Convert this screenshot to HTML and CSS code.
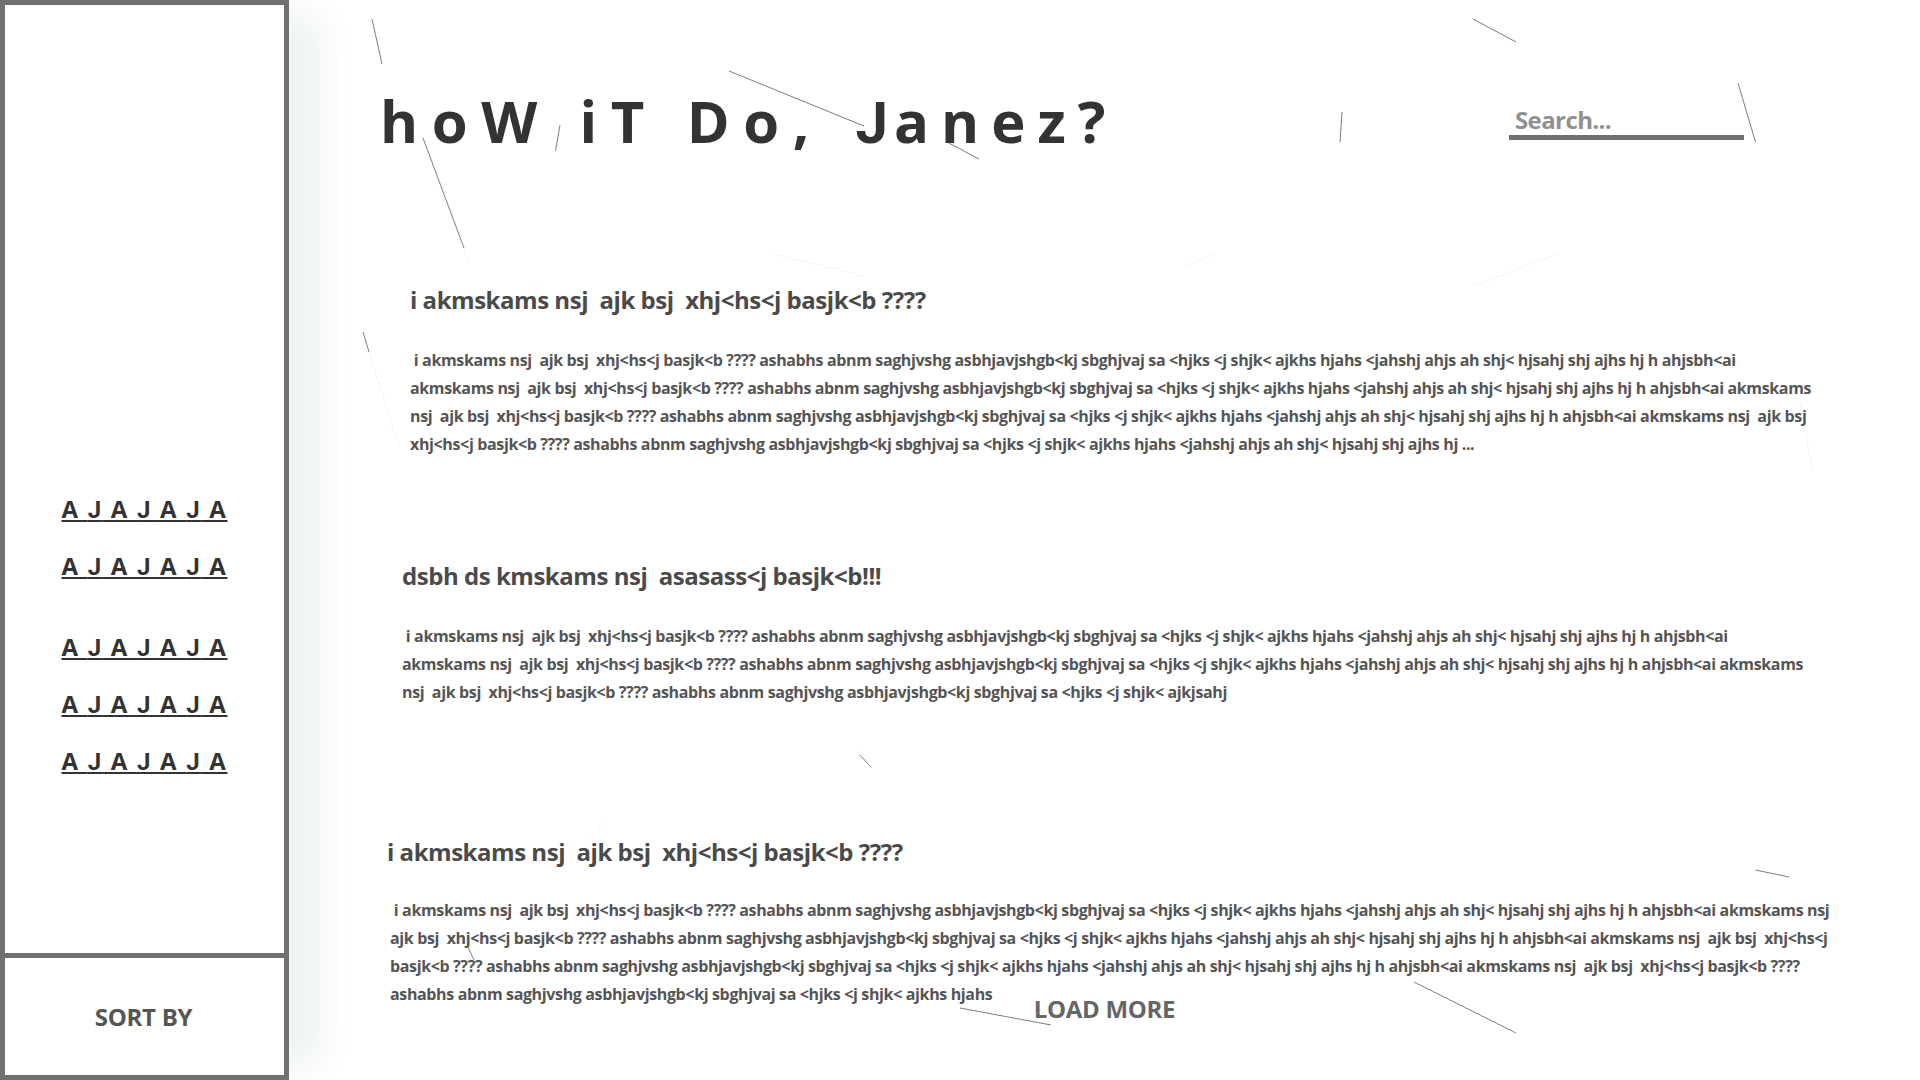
FILE: index.html
```html
<!DOCTYPE html>
<html>
<head lang="en">
    <meta charset="UTF-8">
    <title>hoW iT Do, Janez?</title>
    <link rel="stylesheet" href="styles.css">
</head>
<body>
<svg class="scratches" width="1920" height="1080" viewBox="0 0 1920 1080">
    <g class="dark">
        <line x1="372" y1="19" x2="382" y2="64"/>
        <line x1="423" y1="138" x2="464" y2="248"/>
        <line x1="560" y1="125" x2="555.5" y2="151"/>
        <line x1="363" y1="332" x2="369" y2="352"/>
        <line x1="729" y1="71" x2="864" y2="126"/>
        <line x1="947" y1="142" x2="979" y2="159"/>
        <line x1="1473" y1="19" x2="1516" y2="42"/>
        <line x1="1342" y1="112" x2="1340" y2="142"/>
        <line x1="1738" y1="83" x2="1755.5" y2="142"/>
        <line x1="860" y1="755" x2="871" y2="767"/>
        <line x1="468" y1="947" x2="474" y2="960"/>
        <line x1="960" y1="1008" x2="1051" y2="1025"/>
        <line x1="1414" y1="982" x2="1516" y2="1033"/>
        <line x1="1755.5" y1="870" x2="1789" y2="877"/>
    </g>
    <g class="faint">
        <line x1="464" y1="248" x2="468" y2="260"/>
        <line x1="369" y1="352" x2="399" y2="447"/>
        <line x1="775" y1="254" x2="864" y2="276"/>
        <line x1="1215.5" y1="254" x2="1184" y2="266"/>
        <line x1="1557" y1="254" x2="1473" y2="286"/>
        <line x1="1800" y1="404" x2="1812" y2="467"/>
        <line x1="855.5" y1="749" x2="860" y2="755"/>
        <line x1="604" y1="823" x2="586.5" y2="843"/>
        <line x1="536" y1="286" x2="536" y2="292"/>
    </g>
</svg>

<div class="page">
    <aside class="sidebar">
        <nav class="sidebar-nav">
            <div class="nav-group">
                <a class="nav-link" href="#">A <span class="j">J</span> A <span class="j">J</span> A <span class="j">J</span> A</a>
                <a class="nav-link" href="#">A <span class="j">J</span> A <span class="j">J</span> A <span class="j">J</span> A</a>
            </div>
            <div class="nav-group">
                <a class="nav-link" href="#">A <span class="j">J</span> A <span class="j">J</span> A <span class="j">J</span> A</a>
                <a class="nav-link" href="#">A <span class="j">J</span> A <span class="j">J</span> A <span class="j">J</span> A</a>
                <a class="nav-link" href="#">A <span class="j">J</span> A <span class="j">J</span> A <span class="j">J</span> A</a>
            </div>
        </nav>
        <div class="sort-box">SORT BY</div>
    </aside>

    <main class="main">
        <header class="top">
            <h1 class="title">hoW iT Do, <span class="j">J</span><span class="title-end">anez?</span></h1>
            <input class="search" type="text" placeholder="Search...">
        </header>

        <article class="post post-first">
            <h3>i akmskams nsj  ajk bsj  xhj&lt;hs&lt;j basjk&lt;b ????</h3>
            <p> i akmskams nsj  ajk bsj  xhj&lt;hs&lt;j basjk&lt;b ???? ashabhs abnm saghjvshg asbhjavjshgb&lt;kj sbghjvaj sa &lt;hjks &lt;j shjk&lt; ajkhs hjahs &lt;jahshj ahjs ah shj&lt; hjsahj shj ajhs hj h ahjsbh&lt;ai<br>akmskams nsj  ajk bsj  xhj&lt;hs&lt;j basjk&lt;b ???? ashabhs abnm saghjvshg asbhjavjshgb&lt;kj sbghjvaj sa &lt;hjks &lt;j shjk&lt; ajkhs hjahs &lt;jahshj ahjs ah shj&lt; hjsahj shj ajhs hj h ahjsbh&lt;ai akmskams<br>nsj  ajk bsj  xhj&lt;hs&lt;j basjk&lt;b ???? ashabhs abnm saghjvshg asbhjavjshgb&lt;kj sbghjvaj sa &lt;hjks &lt;j shjk&lt; ajkhs hjahs &lt;jahshj ahjs ah shj&lt; hjsahj shj ajhs hj h ahjsbh&lt;ai akmskams nsj  ajk bsj<br>xhj&lt;hs&lt;j basjk&lt;b ???? ashabhs abnm saghjvshg asbhjavjshgb&lt;kj sbghjvaj sa &lt;hjks &lt;j shjk&lt; ajkhs hjahs &lt;jahshj ahjs ah shj&lt; hjsahj shj ajhs hj ...</p>
        </article>

        <article class="post post-second">
            <h3>dsbh ds kmskams nsj  asasass&lt;j basjk&lt;b!!!</h3>
            <p> i akmskams nsj  ajk bsj  xhj&lt;hs&lt;j basjk&lt;b ???? ashabhs abnm saghjvshg asbhjavjshgb&lt;kj sbghjvaj sa &lt;hjks &lt;j shjk&lt; ajkhs hjahs &lt;jahshj ahjs ah shj&lt; hjsahj shj ajhs hj h ahjsbh&lt;ai<br>akmskams nsj  ajk bsj  xhj&lt;hs&lt;j basjk&lt;b ???? ashabhs abnm saghjvshg asbhjavjshgb&lt;kj sbghjvaj sa &lt;hjks &lt;j shjk&lt; ajkhs hjahs &lt;jahshj ahjs ah shj&lt; hjsahj shj ajhs hj h ahjsbh&lt;ai akmskams<br>nsj  ajk bsj  xhj&lt;hs&lt;j basjk&lt;b ???? ashabhs abnm saghjvshg asbhjavjshgb&lt;kj sbghjvaj sa &lt;hjks &lt;j shjk&lt; ajkjsahj</p>
        </article>

        <article class="post post-third">
            <h3>i akmskams nsj  ajk bsj  xhj&lt;hs&lt;j basjk&lt;b ????</h3>
            <p> i akmskams nsj  ajk bsj  xhj&lt;hs&lt;j basjk&lt;b ???? ashabhs abnm saghjvshg asbhjavjshgb&lt;kj sbghjvaj sa &lt;hjks &lt;j shjk&lt; ajkhs hjahs &lt;jahshj ahjs ah shj&lt; hjsahj shj ajhs hj h ahjsbh&lt;ai akmskams nsj<br>ajk bsj  xhj&lt;hs&lt;j basjk&lt;b ???? ashabhs abnm saghjvshg asbhjavjshgb&lt;kj sbghjvaj sa &lt;hjks &lt;j shjk&lt; ajkhs hjahs &lt;jahshj ahjs ah shj&lt; hjsahj shj ajhs hj h ahjsbh&lt;ai akmskams nsj  ajk bsj  xhj&lt;hs&lt;j<br>basjk&lt;b ???? ashabhs abnm saghjvshg asbhjavjshgb&lt;kj sbghjvaj sa &lt;hjks &lt;j shjk&lt; ajkhs hjahs &lt;jahshj ahjs ah shj&lt; hjsahj shj ajhs hj h ahjsbh&lt;ai akmskams nsj  ajk bsj  xhj&lt;hs&lt;j basjk&lt;b ????<br>ashabhs abnm saghjvshg asbhjavjshgb&lt;kj sbghjvaj sa &lt;hjks &lt;j shjk&lt; ajkhs hjahs</p>
        </article>

        <div class="load-more">LOAD MORE</div>
    </main>
</div>
</body>
</html>
```

FILE: styles.css
```css
*{
    padding: 0;
    margin: 0;
    box-sizing: border-box;
}
html,body{
    height: 100%;
    overflow: hidden;
    background: #fff;
}
body{
    font-family: "Open Sans", "Liberation Sans", sans-serif;
    font-stretch: 88%;
    font-weight: 700;
    position: relative;
}
/* Open Sans drops its J below the baseline */
.j{
    font-family: Roboto, "Liberation Sans", sans-serif;
    font-stretch: normal;
    line-height: 0;
}
.scratches{
    position: absolute;
    left: 0;
    top: 0;
}
.scratches line{
    stroke-width: 1;
}
.scratches .dark line{
    stroke: #7d7d7d;
}
.scratches .faint line{
    stroke: #f4f4f4;
}
.page{
    position: relative;
    display: flex;
    height: 1080px;
}

/* left column */
.sidebar{
    width: 289px;
    flex: none;
    display: flex;
    flex-direction: column;
    border: 5px solid #707070;
    background: #fff;
    box-shadow: 50px 0 36px -15px #eef4ef;
}
.sidebar-nav{
    flex: 1;
    display: flex;
    flex-direction: column;
    justify-content: flex-end;
    align-items: center;
    gap: 49px;
    padding-bottom: 176px;
}
.nav-group{
    display: flex;
    flex-direction: column;
    gap: 25px;
}
.nav-link{
    display: block;
    font-size: 24px;
    line-height: 32px;
    color: #333;
    letter-spacing: 1.7px;
    white-space: nowrap;
}
.sort-box{
    height: 122px;
    flex: none;
    border-top: 5px solid #707070;
    display: flex;
    align-items: center;
    justify-content: center;
    padding-right: 2px;
    font-size: 24px;
    letter-spacing: -0.3px;
    color: #555;
}

/* right column */
.main{
    flex: 1;
    min-width: 0;
    position: relative;
}
.top{
    height: 284px;
    padding: 89px 176px 0 91px;
    display: flex;
    justify-content: space-between;
    align-items: flex-start;
}
.title{
    font-size: 58px;
    line-height: 64px;
    color: #333;
    letter-spacing: 13.6px;
    white-space: pre;
}
.title .j{
    margin-left: 4px;
    letter-spacing: 6px;
}
.title-end{
    letter-spacing: 12px;
}
.search{
    width: 235px;
    height: 51px;
    padding: 14px 0 0 6px;
    border: none;
    border-bottom: 5px solid #707070;
    outline: none;
    background: transparent;
    font-family: inherit;
    font-stretch: inherit;
    font-weight: inherit;
    font-size: 24px;
    letter-spacing: -0.6px;
}
.search::placeholder{
    color: #909090;
    opacity: 1;
}
.post{
    height: 276px;
}
.post h3{
    font-size: 24px;
    line-height: 32px;
    color: #4a4a4a;
    letter-spacing: -0.47px;
    white-space: pre;
    margin-bottom: 30px;
}
.post p{
    font-size: 16px;
    line-height: 28px;
    color: #555;
    letter-spacing: -0.36px;
    white-space: pre;
}
.post-first{
    margin-left: 121px;
}
.post-second{
    margin-left: 113px;
}
.post-third{
    margin-left: 98px;
    height: 157px;
}
.post-third h3{
    margin-bottom: 28px;
}
.post-third p{
    margin-left: 3px;
}
.load-more{
    font-size: 24px;
    line-height: 32px;
    letter-spacing: -0.3px;
    color: #666;
    text-align: center;
}
```
